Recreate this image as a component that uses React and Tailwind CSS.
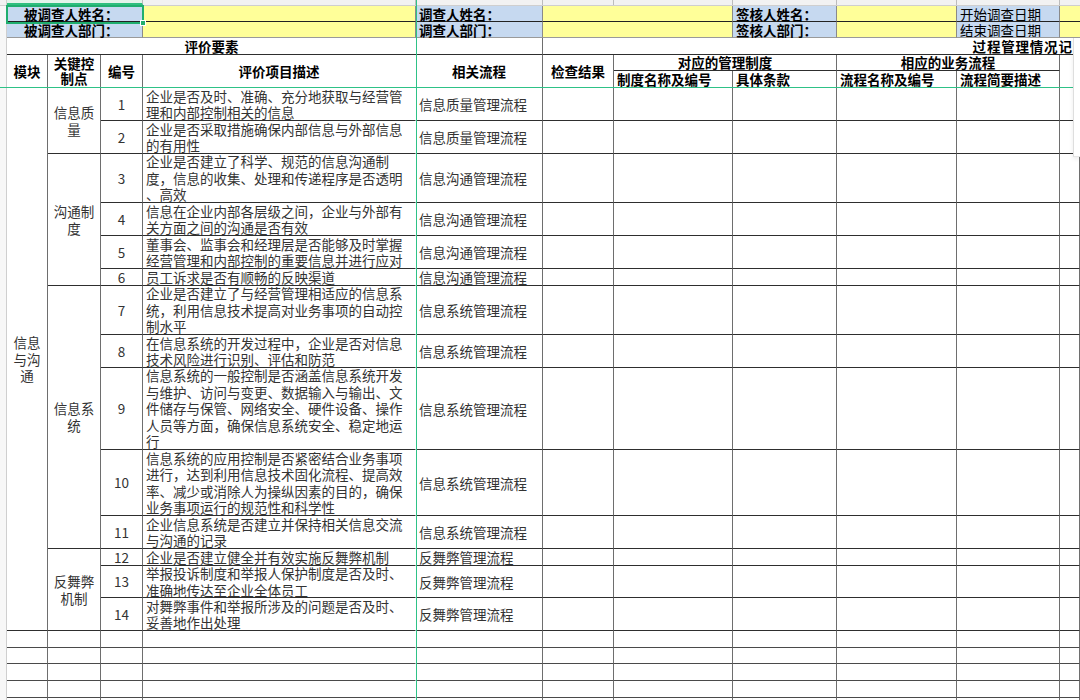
import React from "react";

const V = "border-r border-r-[#6e6e6e]";
const H = "border-b border-b-[#2e2e2e]";

const groups = [
  {
    name: ["信息质", "量"],
    items: [
      { n: "1", d: ["企业是否及时、准确、充分地获取与经营管", "理和内部控制相关的信息"], p: "信息质量管理流程" },
      { n: "2", d: ["企业是否采取措施确保内部信息与外部信息", "的有用性"], p: "信息质量管理流程" },
    ],
  },
  {
    name: ["沟通制", "度"],
    items: [
      { n: "3", d: ["企业是否建立了科学、规范的信息沟通制", "度，信息的收集、处理和传递程序是否透明", "、高效"], p: "信息沟通管理流程" },
      { n: "4", d: ["信息在企业内部各层级之间，企业与外部有", "关方面之间的沟通是否有效"], p: "信息沟通管理流程" },
      { n: "5", d: ["董事会、监事会和经理层是否能够及时掌握", "经营管理和内部控制的重要信息并进行应对"], p: "信息沟通管理流程" },
      { n: "6", d: ["员工诉求是否有顺畅的反映渠道"], p: "信息沟通管理流程" },
    ],
  },
  {
    name: ["信息系", "统"],
    items: [
      { n: "7", d: ["企业是否建立了与经营管理相适应的信息系", "统，利用信息技术提高对业务事项的自动控", "制水平"], p: "信息系统管理流程" },
      { n: "8", d: ["在信息系统的开发过程中，企业是否对信息", "技术风险进行识别、评估和防范"], p: "信息系统管理流程" },
      { n: "9", d: ["信息系统的一般控制是否涵盖信息系统开发", "与维护、访问与变更、数据输入与输出、文", "件储存与保管、网络安全、硬件设备、操作", "人员等方面，确保信息系统安全、稳定地运", "行"], p: "信息系统管理流程" },
      { n: "10", d: ["信息系统的应用控制是否紧密结合业务事项", "进行，达到利用信息技术固化流程、提高效", "率、减少或消除人为操纵因素的目的，确保", "业务事项运行的规范性和科学性"], p: "信息系统管理流程" },
      { n: "11", d: ["企业信息系统是否建立并保持相关信息交流", "与沟通的记录"], p: "信息系统管理流程" },
    ],
  },
  {
    name: ["反舞弊", "机制"],
    items: [
      { n: "12", d: ["企业是否建立健全并有效实施反舞弊机制"], p: "反舞弊管理流程" },
      { n: "13", d: ["举报投诉制度和举报人保护制度是否及时、", "准确地传达至企业全体员工"], p: "反舞弊管理流程" },
      { n: "14", d: ["对舞弊事件和举报所涉及的问题是否及时、", "妥善地作出处理"], p: "反舞弊管理流程" },
    ],
  },
];

const spanClass = {
  2: "row-span-2",
  3: "row-span-3",
  4: "row-span-4",
  5: "row-span-5",
  14: "row-span-14",
};

const body = "text-[13.5px] leading-[16.4px] text-[#333]";
const bold = "text-[13.5px] leading-[15px] font-bold text-black";

function Lines({ lines }) {
  return lines.map((l, i) => (
    <div key={i} className="whitespace-nowrap">
      {l}
    </div>
  ));
}

function BodyRows() {
  const cells = [];
  groups.forEach((g, gi) => {
    g.items.forEach((it, ii) => {
      if (gi === 0 && ii === 0) {
        cells.push(
          <div
            key="mod"
            className={`row-span-14 ${V} ${H} flex flex-col items-center justify-center ${body} leading-[16.5px]`}
          >
            <div>信息</div>
            <div>与沟</div>
            <div>通</div>
          </div>
        );
      }
      if (ii === 0) {
        cells.push(
          <div
            key={`g${gi}`}
            className={`${spanClass[g.items.length]} ${V} ${H} flex flex-col items-center justify-center ${body} leading-[17px]`}
          >
            <Lines lines={g.name} />
          </div>
        );
      }
      cells.push(
        <div key={`n${it.n}`} className={`${V} ${H} flex items-center justify-center ${body}`}>
          {it.n}
        </div>
      );
      cells.push(
        <div
          key={`d${it.n}`}
          className={`border-r border-r-transparent ${H} flex flex-col justify-center pl-[3px] overflow-hidden ${body}`}
        >
          <Lines lines={it.d} />
        </div>
      );
      cells.push(
        <div
          key={`p${it.n}`}
          className={`${V} ${H} flex items-center pl-[3px] pt-[1px] whitespace-nowrap overflow-hidden ${body}`}
        >
          {it.p}
        </div>
      );
      for (let k = 0; k < 6; k++) {
        cells.push(<div key={`e${it.n}-${k}`} className={`${V} ${H}`} />);
      }
    });
  });
  for (let r = 0; r < 5; r++) {
    for (let c = 0; c < 11; c++) {
      cells.push(
        <div
          key={`x${r}-${c}`}
          className={`${c === 3 ? "border-r border-r-transparent" : V} border-b border-b-[#4a4a4a]`}
        />
      );
    }
  }
  return cells;
}

export default function App() {
  const blue = "bg-[#c6d9f0]";
  const yellow = "bg-[#ffff99]";
  const topV = "border-r border-r-[#8a8a8a]";
  const r1B = "border-b border-b-[#222]";
  const r2B = "border-b border-b-[#9a9a9a]";
  const lab = "text-[13.5px] leading-[14px] font-bold text-black";

  return (
    <div className="relative w-[1080px] h-[700px] overflow-hidden bg-white font-['Noto_Sans_CJK_SC','Noto_Sans',sans-serif]">
      {/* column header strip */}
      <div className="flex h-[6px]">
        <div className="w-[7px] shrink-0 bg-[#f2f2f2] border-r border-r-[#d0d0d0] border-b border-b-[#d0d0d0]" />
        <div className="flex-1 grid grid-cols-[136px_273px_127px_71px_119px_104px_120px_103px_20px] bg-[#f2f2f2] border-b border-b-[#cfcfcf]">
          <div className="bg-[#e3f4ea] border-r border-r-[#bcbcbc] border-b-2 border-b-[#2fbf7f]" />
          <div className="border-r border-r-[#bcbcbc]" />
          <div className="border-r border-r-[#bcbcbc]" />
          <div className="border-r border-r-[#bcbcbc]" />
          <div className="border-r border-r-[#bcbcbc]" />
          <div className="border-r border-r-[#bcbcbc]" />
          <div className="border-r border-r-[#bcbcbc]" />
          <div className="border-r border-r-[#bcbcbc]" />
          <div />
        </div>
      </div>

      <div className="flex">
        <div className="w-[7px] shrink-0 bg-[#f7f7f7] border-r border-r-[#cfcfcf]" />
        <div className="grid grid-cols-[41px_53px_42px_273px_127px_71px_119px_104px_120px_103px_20px] grid-rows-[16px_16px_17px_16px_17px_33px_33px_49px_33px_33px_17px_49px_33px_82px_66px_33px_17px_32px_33px_17px_16px_17px_17px_16px]">
          {/* row 1 */}
          <div className={`col-span-3 ${blue} ${topV} ${r1B} flex items-center pl-[17px] ${lab}`}>被调查人姓名：</div>
          <div className={`${yellow} ${topV} ${r1B}`} />
          <div className={`${blue} ${topV} ${r1B} flex items-center pl-[3px] ${lab}`}>调查人姓名：</div>
          <div className={`col-span-2 ${yellow} ${topV} ${r1B}`} />
          <div className={`${blue} ${topV} ${r1B} flex items-center pl-[3px] ${lab}`}>签核人姓名：</div>
          <div className={`${yellow} ${topV} ${r1B}`} />
          <div className={`${blue} ${topV} ${r1B} flex items-center pl-[3px] whitespace-nowrap overflow-hidden ${lab} font-normal`}>开始调查日期</div>
          <div className={`${yellow} ${r1B}`} />

          {/* row 2 */}
          <div className={`col-span-3 ${blue} ${topV} ${r2B} flex items-center pl-[17px] ${lab}`}>被调查人部门：</div>
          <div className={`${yellow} ${topV} ${r2B}`} />
          <div className={`${blue} ${topV} ${r2B} flex items-center pl-[3px] ${lab}`}>调查人部门：</div>
          <div className={`col-span-2 ${yellow} ${topV} ${r2B}`} />
          <div className={`${blue} ${topV} ${r2B} flex items-center pl-[3px] ${lab}`}>签核人部门：</div>
          <div className={`${yellow} ${topV} ${r2B}`} />
          <div className={`${blue} ${topV} ${r2B} flex items-center pl-[3px] whitespace-nowrap overflow-hidden ${lab} font-normal`}>结束调查日期</div>
          <div className={`${yellow} ${r2B}`} />

          {/* row 3 */}
          <div className={`col-span-4 ${H} flex items-center justify-center ${bold}`}>评价要素</div>
          <div className={`${V} ${H}`} />
          <div className={`col-span-6 ${H} flex items-center justify-end overflow-hidden ${bold}`}>
            <span className="whitespace-nowrap mr-[-7px] tracking-[0.8px]">过程管理情况记录</span>
          </div>

          {/* header rows */}
          <div className={`row-span-2 ${V} ${H} flex items-center justify-center ${bold}`}>模块</div>
          <div className={`row-span-2 ${V} ${H} flex flex-col items-center justify-center ${bold} leading-[15.5px]`}>
            <div>关键控</div>
            <div>制点</div>
          </div>
          <div className={`row-span-2 ${V} ${H} flex items-center justify-center ${bold}`}>编号</div>
          <div className={`row-span-2 border-r border-r-transparent ${H} flex items-center justify-center ${bold}`}>评价项目描述</div>
          <div className={`row-span-2 ${V} ${H} flex items-center justify-center ${bold}`}>相关流程</div>
          <div className={`row-span-2 ${V} ${H} flex items-center justify-center ${bold}`}>检查结果</div>
          <div className={`col-span-2 ${V} ${H} flex items-center justify-center ${bold}`}>对应的管理制度</div>
          <div className={`col-span-2 ${V} ${H} flex items-center justify-center ${bold}`}>相应的业务流程</div>
          <div className={`row-span-2 ${H}`} />
          <div className={`${V} ${H} flex items-center pl-[3px] whitespace-nowrap overflow-hidden ${bold}`}>制度名称及编号</div>
          <div className={`${V} ${H} flex items-center pl-[3px] whitespace-nowrap overflow-hidden ${bold}`}>具体条款</div>
          <div className={`${V} ${H} flex items-center pl-[3px] whitespace-nowrap overflow-hidden ${bold}`}>流程名称及编号</div>
          <div className={`${V} ${H} flex items-center pl-[3px] whitespace-nowrap overflow-hidden ${bold}`}>流程简要描述</div>

          <BodyRows />
        </div>
      </div>

      {/* reading-mode crosshair lines */}
      <div className="absolute left-[416px] top-0 w-px h-[700px] bg-[#2ec287]" />
      <div className="absolute left-0 top-[87px] w-[1080px] h-px bg-[#2ec287]" />

      {/* selected cell */}
      <div className="absolute left-[6px] top-[5px] w-[138px] h-[19px] border-2 border-[#1fae6e]" />
      <div className="absolute left-[140px] top-[20px] w-[6px] h-[6px] bg-[#1fae6e] border border-white" />

      {/* floating panel edge at right */}
      <div className="absolute left-[1073px] top-[38px] w-[7px] h-[119px] bg-white border-l border-l-[#dedede] border-b border-b-[#e6e6e6] shadow-[0_2px_4px_rgba(0,0,0,0.08)]" />
    </div>
  );
}
